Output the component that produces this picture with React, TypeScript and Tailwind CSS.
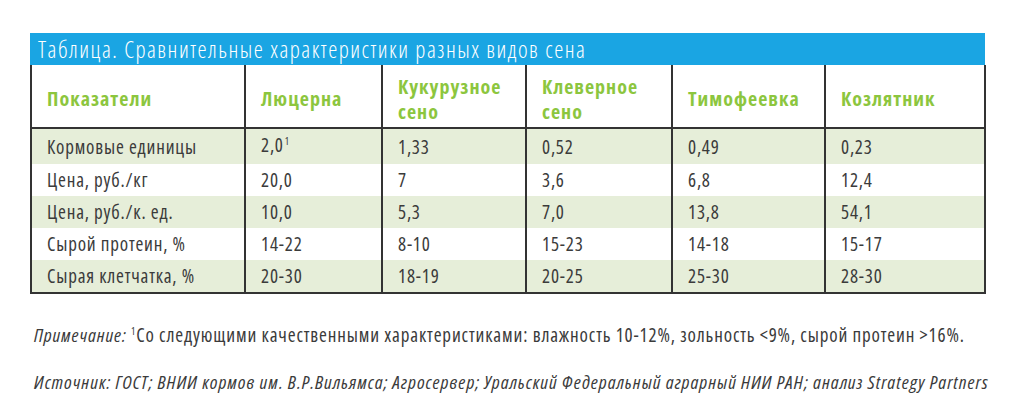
import React from 'react';

const columns = ['Показатели', 'Люцерна', 'Кукурузное сено', 'Клеверное сено', 'Тимофеевка', 'Козлятник'];
const widths = ['w-[214px]', 'w-[137px]', 'w-[144px]', 'w-[146px]', 'w-[153px]', 'w-[160px]'];

const rows: string[][] = [
    ['Кормовые единицы', '2,0¹', '1,33', '0,52', '0,49', '0,23'],
    ['Цена, руб./кг', '20,0', '7', '3,6', '6,8', '12,4'],
    ['Цена, руб./к. ед.', '10,0', '5,3', '7,0', '13,8', '54,1'],
    ['Сырой протеин, %', '14-22', '8-10', '15-23', '14-18', '15-17'],
    ['Сырая клетчатка, %', '20-30', '18-19', '20-25', '25-30', '28-30'],
];

export default function App() {
    return (
        <div className="w-[1024px] h-[416px] bg-white pt-[33px] pl-[30px] font-['Open_Sans',sans-serif] font-stretch-condensed text-[#3b3b3b]">
            <div className="w-[955px]">
                <div className="h-[32px] bg-[#1aa5e3] pl-[8px] text-[23px] leading-[32px] tracking-[1.5px] font-light text-white">
                    Таблица. Сравнительные характеристики разных видов сена
                </div>
                <table className="w-full border-collapse border-2 border-t-0 border-[#333] table-fixed">
                    <thead>
                        <tr className="h-[63px] border-b-2 border-[#333]">
                            {columns.map((c, i) => (
                                <th
                                    key={c}
                                    className={`${widths[i]} border-r-2 border-[#333] px-[15px] pt-[5px] text-left align-middle text-[20px] leading-[25px] tracking-[1px] font-bold text-[#8cc63e]`}
                                >
                                    {c.includes(' ') && i > 0 ? (
                                        <>
                                            {c.split(' ')[0]}
                                            <br />
                                            {c.split(' ')[1]}
                                        </>
                                    ) : (
                                        c
                                    )}
                                </th>
                            ))}
                        </tr>
                    </thead>
                    <tbody>
                        {rows.map((r, ri) => (
                            <tr key={ri} className={`h-[32px] ${ri % 2 === 0 ? 'bg-[#e6eed9]' : 'bg-white'}`}>
                                {r.map((cell, ci) => (
                                    <td key={ci} className="border-r-2 border-[#333] px-[15px] text-[19px] leading-[32px] tracking-[0.8px]">
                                        {cell.endsWith('¹') ? (
                                            <>
                                                {cell.slice(0, -1)}
                                                <span className="text-[10px] relative -top-[7px] ml-[1px]">1</span>
                                            </>
                                        ) : (
                                            cell
                                        )}
                                    </td>
                                ))}
                            </tr>
                        ))}
                    </tbody>
                </table>
            </div>
            <div className="mt-[29px] pl-[4px] text-[19px] leading-[24px]">
                <p className="tracking-[0.85px]">
                    <i>Примечание:</i> <span className="text-[10px] relative -top-[7px]">1</span>Со следующими качественными характеристиками: влажность 10-12%, зольность &lt;9%, сырой протеин &gt;16%.
                </p>
                <p className="mt-[20px] italic tracking-[1px]">
                    Источник: ГОСТ; ВНИИ кормов им. В.Р.Вильямса; Агросервер; Уральский Федеральный аграрный НИИ РАН; анализ Strategy Partners
                </p>
            </div>
        </div>
    );
}
